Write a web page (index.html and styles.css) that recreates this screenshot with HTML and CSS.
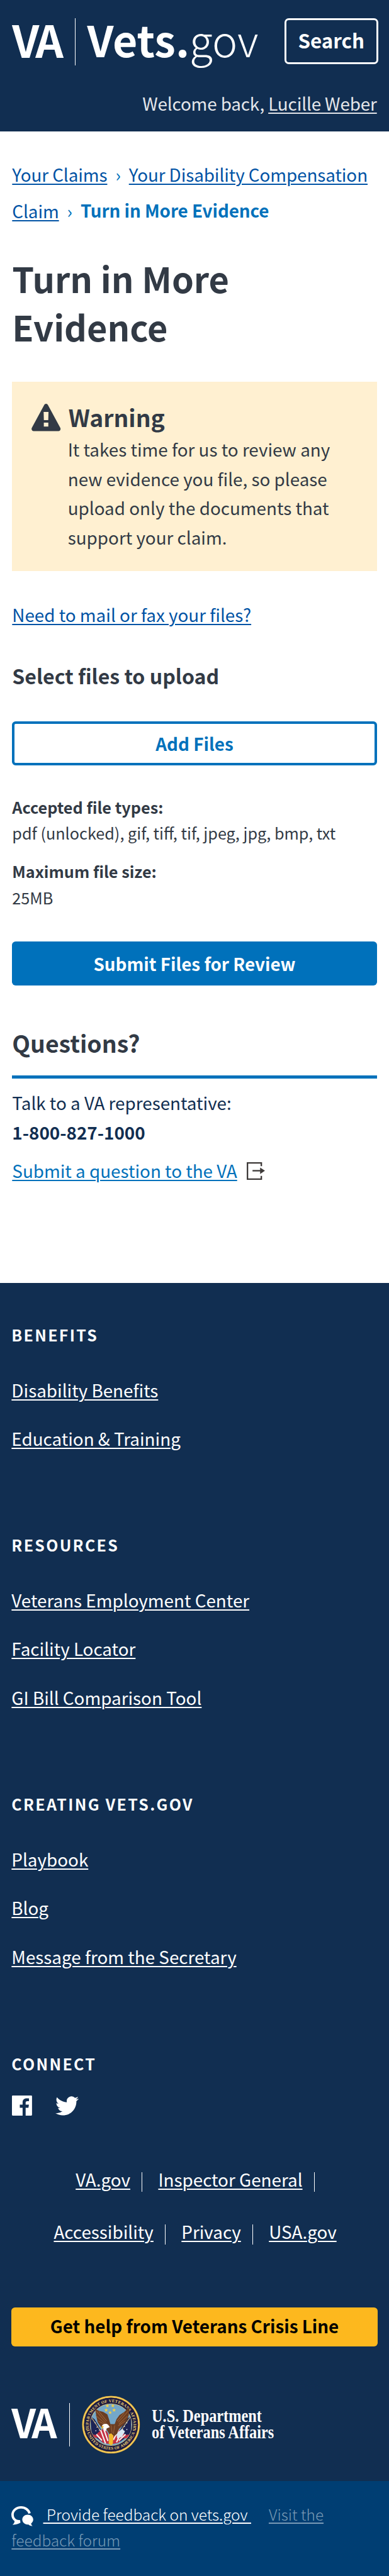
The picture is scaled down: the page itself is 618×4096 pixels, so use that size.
FILE: index.html
```html
<!DOCTYPE html>
<html lang="en">
<head>
<meta charset="utf-8">
<title>Turn in More Evidence | Vets.gov</title>
<link rel="stylesheet" href="styles.css">
</head>
<body>
<header class="header">
  <div class="header-row">
    <div class="logo">
      <span class="va-mark">VA</span>
      <span class="logo-divider"></span>
      <span class="vets">Vets<span class="dot">.</span><span class="gov">gov</span></span>
    </div>
    <button class="search-btn" type="button">Search</button>
  </div>
  <p class="welcome">Welcome back, <a href="#">Lucille Weber</a></p>
</header>

<main class="main">
  <nav class="breadcrumb"><a href="#">Your Claims</a><span class="sep">›</span><a href="#">Your Disability Compensation Claim</a><span class="sep">›</span><strong>Turn in More Evidence</strong></nav>
  <h1 class="title">Turn in More Evidence</h1>
  <section class="alert">
    <svg class="alert-icon" viewBox="0 0 48 45"><path fill="#323a45" fill-rule="evenodd" d="M24 0c1.300 0 2.500.8 3.100 2l20.300 37.500c1.300 2.500-.3 5.500-3.100 5.500H3.700c-2.800 0-4.400-3-3.100-5.500L20.900 2C21.500.8 22.700 0 24 0zM20 13.500l.4 13.500h7.200l.4-13.500zM20.300 31v6.600h7.400V31z"/></svg>
    <div class="alert-body">
      <h2 class="alert-title">Warning</h2>
      <p>It takes time for us to review any new evidence you file, so please upload only the documents that support your claim.</p>
    </div>
  </section>
  <p class="mail-link"><a href="#">Need to mail or fax your files?</a></p>
  <h3 class="select-title">Select files to upload</h3>
  <button class="btn btn-outline" type="button">Add Files</button>
  <div class="file-info">
    <p><strong>Accepted file types:</strong><br>pdf (unlocked), gif, tiff, tif, jpeg, jpg, bmp, txt</p>
    <p><strong>Maximum file size:</strong><br>25MB</p>
  </div>
  <button class="btn btn-primary" type="button">Submit Files for Review</button>
  <section class="questions">
    <h2>Questions?</h2>
    <p>Talk to a VA representative:<br><strong>1-800-827-1000</strong></p>
    <p class="ask"><a href="#">Submit a question to the VA</a><svg class="exit-icon" viewBox="0 0 30 29"><path d="M24 6.500V1.200H1.200v26.600H24v-5.300" fill="none" stroke="#3e3a39" stroke-width="2.400"/><path d="M9.500 14H23" stroke="#3e3a39" stroke-width="2.400"/><path d="M22 8.700L30 14l-8 5.300z" fill="#3e3a39"/></svg></p>
  </section>
</main>

<footer class="footer">
  <section class="group">
    <h4>Benefits</h4>
    <ul><li><a href="#">Disability Benefits</a></li><li><a href="#">Education &amp; Training</a></li></ul>
  </section>
  <section class="group">
    <h4>Resources</h4>
    <ul><li><a href="#">Veterans Employment Center</a></li><li><a href="#">Facility Locator</a></li><li><a href="#">GI Bill Comparison Tool</a></li></ul>
  </section>
  <section class="group">
    <h4>Creating Vets.gov</h4>
    <ul><li><a href="#">Playbook</a></li><li><a href="#">Blog</a></li><li><a href="#">Message from the Secretary</a></li></ul>
  </section>
  <section class="connect">
    <h4>Connect</h4>
    <div class="social">
      <svg class="facebook" viewBox="0 0 33 33"><path fill="#fff" fill-rule="evenodd" d="M1.200 0h30.600A1.200 1.200 0 0 1 33 1.200v30.600a1.200 1.200 0 0 1-1.200 1.200H22.500V20.300h4.600l.8-5.300h-5.400v-3.200c0-1.600.7-2.500 2.700-2.500h2.800V4.800c-.8-.1-2.200-.2-3.700-.2-4.300 0-6.800 2.400-6.800 6.700V15h-4.600v5.300h4.600V33H1.200A1.200 1.200 0 0 1 0 31.800V1.200A1.200 1.200 0 0 1 1.200 0z"/></svg>
      <svg class="twitter" viewBox="0 2 24 20"><path fill="#fff" d="M23.950 4.570a10 10 0 0 1-2.820.770 4.960 4.960 0 0 0 2.160-2.720c-.95.550-2 .950-3.130 1.180a4.920 4.920 0 0 0-8.380 4.480C7.690 8.090 4.070 6.130 1.640 3.160a4.900 4.900 0 0 0-.670 2.470c0 1.710.870 3.210 2.190 4.100a4.900 4.900 0 0 1-2.230-.620v.060a4.920 4.920 0 0 0 3.950 4.830 5 5 0 0 1-2.210.080 4.940 4.940 0 0 0 4.600 3.420A9.870 9.870 0 0 1 0 19.540a13.940 13.940 0 0 0 7.550 2.210c9.050 0 14-7.500 14-13.980 0-.210 0-.420-.020-.630a9.940 9.940 0 0 0 2.460-2.550z"/></svg>
    </div>
  </section>
  <ul class="link-bar">
    <li><a href="#">VA.gov</a></li><li><a href="#">Inspector General</a></li><li><a href="#">Accessibility</a></li><li><a href="#">Privacy</a></li><li><a href="#">USA.gov</a></li>
  </ul>
  <button class="crisis-btn" type="button">Get help from Veterans Crisis Line</button>
  <div class="dept">
    <span class="va-mark va-small">VA</span>
    <span class="dept-divider"></span>
    <svg class="seal" viewBox="0 0 96 96">
      <defs>
        <path id="arc-top" d="M16.300 66.500A36.800 36.800 0 1 1 79.700 66.500"/>
        <path id="arc-bottom" d="M6.800 52A41.400 41.400 0 0 0 89.200 52"/>
        <clipPath id="disc"><circle cx="48" cy="48" r="34"/></clipPath>
      </defs>
      <circle cx="48" cy="48" r="47.800" fill="#5b4a2c"/>
      <circle cx="48" cy="48" r="45.900" fill="none" stroke="#f0c654" stroke-width="2.800"/>
      <circle cx="48" cy="48" r="44.300" fill="#1b1a42"/>
      <circle cx="48" cy="48" r="34.800" fill="#d7c27a"/>
      <circle cx="48" cy="48" r="34" fill="#74a7c9"/>
      <text class="seal-text"><textPath href="#arc-top" startOffset="50%" text-anchor="middle" textLength="136">DEPARTMENT OF VETERANS AFFAIRS</textPath></text>
      <text class="seal-text"><textPath href="#arc-bottom" startOffset="50%" text-anchor="middle" textLength="103">UNITED STATES OF AMERICA</textPath></text>
      <circle cx="7.600" cy="55" r="1" fill="#efd171"/><circle cx="88.400" cy="55" r="1" fill="#efd171"/>
      <g clip-path="url(#disc)">
        <path fill="#1c2455" d="M14 34l7 5 17 28-5 9-17-12zM81 34l-8 5-16 28 6 9 18-13z"/>
        <path d="M15 35l22 32M80 35L58 67" stroke="#cdb77b" stroke-width="1.200"/>
        <path fill="#c42f42" d="M17 64l6 1 7-7 7-4 6 8 2 18-10-2-9-9-8 1zM79 64l-7 1-7-6-6-3-8 8-1 16 10-2 8-8 9 1z"/>
        <path d="M31 57l8 22M36 55l7 20M24 64l9 10M66 59l-9 18M72 64l-11 10M60 57l-8 16" stroke="#f6f1f0" stroke-width="2.200" fill="none"/>
        <path d="M22 45h.1M25 52h.1M29 57h.1M23 58h.1M30 50h.1M74 45h.1M70 51h.1M67 56h.1M74 56h.1" stroke="#fff" stroke-width="1.700" stroke-linecap="round"/>
        <path fill="#d9e7f3" d="M57 62l9-7 5 4-5 9-8 3z"/>
      </g>
      <path fill="#6b3d22" d="M22 22l6 3 7 2 7 4 3 9 2 7 7 0 3-8 5-7 8-5 7-7 1 5-1 8-3 9-6 7-7 6-3 8-6 5-7-5-5-8-9-4-5-7-2-9z"/>
      <path d="M24 26l16 19M28 26l13 16M23 33l15 13M27 42l13 7M76 26L60 44M70 28L58 42M75 34L61 47M71 42l-11 8M48 49l2 13M54 49l-2 14" stroke="#9a6238" stroke-width="1.100" fill="none"/>
      <path fill="#fff" d="M33 50c2-3.500 7-4.500 10-2l3 4-5 2-2 5-3-4z"/>
      <path fill="#f2b92d" d="M33 50l3 .5-1 2.500-3 3zM44 65l4-3 4 4-1 14-3 2-4-3 1-8z"/>
      <path fill="#f2d046" d="M42 14l.9 1.900 2.100.2-1.600 1.400.5 2.100-1.900-1.100-1.900 1.100.5-2.100-1.600-1.400 2.100-.2zM51 14l.9 1.900 2.100.2-1.600 1.400.5 2.100-1.900-1.100-1.900 1.100.5-2.100-1.600-1.400 2.100-.2zM40 21l.9 1.900 2.100.2-1.600 1.400.5 2.100-1.900-1.100-1.900 1.100.5-2.100-1.600-1.400 2.100-.2zM53 21l.9 1.900 2.100.2-1.600 1.400.5 2.100-1.900-1.100-1.900 1.100.5-2.100-1.600-1.400 2.100-.2zM46.500 25l.9 1.900 2.100.2-1.600 1.400.5 2.100-1.900-1.100-1.900 1.100.5-2.100-1.600-1.400 2.100-.2z"/>
    </svg>
    <svg class="dept-name" viewBox="0 0 210 66"><text x="0" y="26" textLength="181" lengthAdjust="spacingAndGlyphs">U.S. Department</text><text x="0" y="52.600" textLength="201" lengthAdjust="spacingAndGlyphs">of Veterans Affairs</text></svg>
  </div>
</footer>

<div class="feedback">
  <svg class="chat-icon" viewBox="0 0 36 33"><path fill="none" stroke="#fff" stroke-width="4" d="M30 12C28.500 6 23 2 16 2 8 2 2 7.500 2 14c0 4 2 7.500 5.500 9.800"/><path fill="#fff" d="M5 21l5.500 1.500 4 .5.500 4.300C12.500 28.600 8 31 2 30.500 5 28.300 6 25.500 5 21z"/><path fill="#fff" d="M27 14c5 0 9 3.600 9 8 0 2.800-1.500 5-3.500 6.400.2 1.600.9 3 2.500 4.200-3 .2-5.500-.9-7-2.500l-1 .1c-5 0-9-3.700-9-8.200s4-8 9-8z"/></svg><a class="fb-main" href="#">&nbsp;Provide feedback on vets.gov&nbsp;</a><a class="fb-forum" href="#">Visit the feedback forum</a>
</div>
</body>
</html>
```
FILE: styles.css
```css
html {
  font-size: 9.66px;
}

* {
  box-sizing: border-box;
}

body {
  display: flex;
  flex-direction: column;
  min-height: 100vh;
  margin: 0;
  background: #fff;
  color: #323a45;
  font-family: "Noto Sans CJK SC", "Noto Sans", sans-serif;
  font-size: 2.88rem;
  line-height: 4.8rem;
}

h1, h2, h3, h4, p, ul {
  margin: 0;
  padding: 0;
}

ul {
  list-style: none;
}

svg {
  display: block;
  flex: none;
}

a {
  color: #0053a5;
  text-decoration: underline;
  text-decoration-thickness: .19rem;
  text-underline-offset: .3rem;
}

button {
  border: 0;
  padding: 0;
  font: inherit;
  font-weight: 700;
}

/* Header */
.header {
  height: 21.6rem;
  padding: 3rem 1.8rem 0 2rem;
  background: #112e51;
  color: #fff;
}

.header-row {
  display: flex;
  justify-content: space-between;
  height: 7.8rem;
}

.logo {
  display: flex;
  line-height: 6.74rem;
  white-space: nowrap;
}

.va-mark {
  width: 10.3rem;
  color: #fff;
  font-size: 7.2rem;
  font-weight: 700;
  letter-spacing: -.5rem;
}

.logo-divider {
  width: .13rem;
  height: 7.8rem;
  margin-right: 1.9rem;
  background: #fff;
}

.vets {
  font-size: 7.02rem;
  font-weight: 700;
}

.gov {
  font-weight: 300;
}

.search-btn {
  width: 15.4rem;
  height: 7.6rem;
  padding-bottom: .4rem;
  border: .4rem solid #fff;
  border-radius: .7rem;
  background: transparent;
  color: #fff;
  font-size: 3.24rem;
}

.welcome {
  margin-top: 3.8rem;
  padding-right: .2rem;
  color: #e4e6ea;
  letter-spacing: -.013rem;
  text-align: right;
}

.welcome a {
  color: inherit;
}

/* Main */
.main {
  height: 189.6rem;
  padding: 4.18rem 2rem 0;
}

.breadcrumb {
  line-height: 6rem;
  letter-spacing: -.008rem;
}

.breadcrumb .sep {
  display: inline-block;
  width: 3.55rem;
  color: #0071bb;
  text-align: center;
}

.breadcrumb strong {
  color: #0071bb;
  vertical-align: .12rem;
  line-height: 1;
}

.title {
  margin-top: 3.91rem;
  font-size: 5.78rem;
  line-height: 8rem;
}

.alert {
  display: flex;
  gap: 1.15rem;
  height: 31.17rem;
  margin-top: 5.1rem;
  padding: 3.34rem 4.8rem 0 3.2rem;
  background: #fff0d1;
}

.alert-icon {
  width: 4.8rem;
  height: 4.5rem;
  margin-top: .37rem;
}

.alert-title {
  margin: 0 0 .45rem .1rem;
  font-size: 3.86rem;
  line-height: 5rem;
}

.mail-link {
  margin-top: 4.78rem;
}

.select-title {
  margin-top: 5.12rem;
  font-size: 3.32rem;
  line-height: 5rem;
}

.btn {
  display: block;
  width: 100%;
  height: 7.24rem;
  border-radius: .6rem;
}

.btn-outline {
  margin-top: 5.1rem;
  border: .45rem solid #0071bb;
  background: #fff;
  color: #0071bb;
}

.btn-primary {
  margin-top: 5rem;
  background: #0071bb;
  color: #fff;
}

.file-info {
  display: grid;
  gap: 1.95rem;
  margin-top: 4.7rem;
  font-size: 2.61rem;
  line-height: 4.33rem;
}

.questions {
  color: #112e51;
}

.questions h2 {
  margin: 6.7rem 0 1.59rem;
  padding-bottom: 2.7rem;
  border-bottom: .58rem solid #0071bb;
  color: #323a45;
  font-size: 3.87rem;
  line-height: 5.4rem;
}

.ask {
  display: flex;
  gap: 1.6rem;
  margin-top: 1.59rem;
}

.ask a {
  color: #0071bb;
}

.exit-icon {
  width: 3rem;
  height: 2.9rem;
  margin-top: 1.02rem;
}

/* Footer */
.footer {
  height: 197.2rem;
  padding: 6.49rem 1.9rem 0;
  background: #112e51;
  color: #fff;
}

.footer a {
  color: inherit;
}

.footer h4 {
  font-size: 2.58rem;
  line-height: 4rem;
  letter-spacing: .24rem;
  text-transform: uppercase;
}

.group {
  margin-bottom: 13.09rem;
}

.group ul {
  display: grid;
  gap: 3.23rem;
  margin-top: 4.68rem;
}

.connect {
  padding-top: .13rem;
}

.social {
  display: flex;
  gap: 3.8rem;
  height: 3.4rem;
  margin: 3.25rem 0 0 .1rem;
}

.facebook {
  width: 3.3rem;
  height: 3.3rem;
}

.twitter {
  width: 3.85rem;
  height: 3.2rem;
  margin-top: .15rem;
}

.link-bar {
  display: flex;
  flex-wrap: wrap;
  justify-content: center;
  gap: 5.35rem 2.6rem;
  width: 58rem;
  margin: 9.2rem 0 0 1.2rem;
}

.link-bar li {
  padding: 0 1.9rem 1rem 0;
  border-right: .18rem solid #fff;
  line-height: 2.28rem;
}

.link-bar li:last-child {
  padding-right: 0;
  border-right: 0;
}

.crisis-btn {
  display: block;
  width: 100%;
  height: 6.4rem;
  margin-top: 10.36rem;
  padding-bottom: .2rem;
  border-radius: .6rem;
  background: #fdb81e;
  color: #000;
}

.dept {
  display: flex;
  align-items: center;
  height: 9.6rem;
  margin-top: 8.13rem;
}

.va-small {
  width: 9.44rem;
  padding-bottom: 1.1rem;
  font-size: 6.5rem;
  letter-spacing: -.6rem;
}

.dept-divider {
  width: .12rem;
  height: 7.1rem;
  background: #fff;
}

.seal {
  width: 9.6rem;
  height: 9.6rem;
  margin-left: 2rem;
}

.seal-text {
  fill: #efd171;
  font: 700 6.800px "Liberation Serif", serif;
}

.dept-name {
  width: 21rem;
  height: 6.6rem;
  margin: 1.77rem 0 0 1.9rem;
  overflow: visible;
  align-self: flex-start;
}

.dept-name text {
  fill: #fff;
  font: 700 29.500px "Liberation Serif", serif;
}

/* Feedback bar */
.feedback {
  flex: 1;
  padding: 3.42rem 1.9rem 0;
  background: #003e73;
  color: #fff;
  font-size: 2.53rem;
  font-weight: 300;
  line-height: 4.2rem;
}

.feedback a {
  color: inherit;
}

.chat-icon {
  display: inline-block;
  width: 3.6rem;
  height: 3.3rem;
  margin-right: 1.6rem;
  vertical-align: -.9rem;
}

.feedback .fb-forum {
  margin-left: 2.9rem;
  color: rgba(255, 255, 255, .48);
}
```
